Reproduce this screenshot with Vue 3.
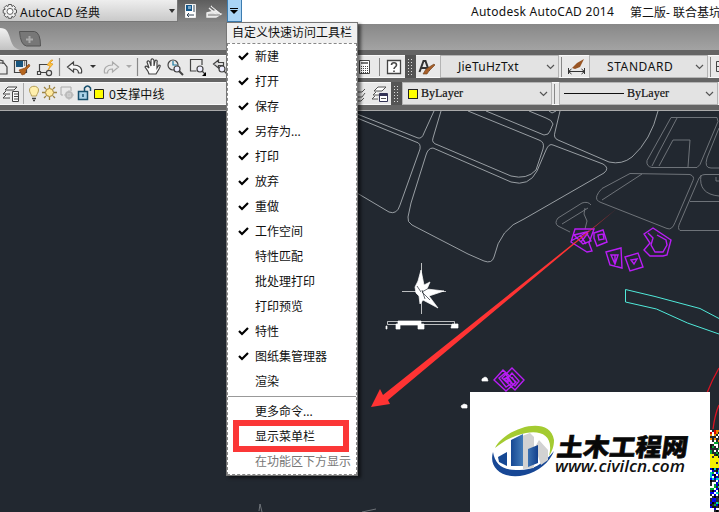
<script setup>
const menu = [
  ['新建', 1], ['打开', 1], ['保存', 1], ['另存为...', 1], ['打印', 1], ['放弃', 1], ['重做', 1],
  ['工作空间', 1], ['特性匹配', 0], ['批处理打印', 0], ['打印预览', 0], ['特性', 1], ['图纸集管理器', 1], ['渲染', 0],
]
const palette = ['#0000d8', '#fff', '#000', '#0a3', '#111', '#00f', '#222830', '#0cc', '#222830', '#fff']
const specks = []
let seed = 7
for (let y = 430; y < 512; y += 2) {
  for (let x = 710; x < 719; x += 2) {
    seed = (seed * 73 + 41) % 1009
    let c = palette[seed % palette.length]
    if (y < 442) c = ['#d00', '#222830', '#fff', '#e80', '#222830'][seed % 5]
    else if (y < 454) c = ['#222830', '#111', '#0a3', '#222830', '#fff'][seed % 5]
    else if (y < 468 && y > 452 + (x - 710) / 2) c = seed % 9 ? '#f5f000' : '#333'
    specks.push({ x, y, c })
  }
}
</script>

<template>
  <div class="app">
    <header class="titlebar">
      <div class="workspace">
        <svg class="gear" width="18" height="22" viewBox="1 0 18 22">
          <path d="M8.500 4.500h3l.5 2 1.500-1 2 2-1 1.800 2 .6v3l-2 .6 1 1.800-2 2-1.600-1-.5 2h-3l-.6-2-1.600 1-2-2 1-1.800-2-.6v-3l2-.6-1-1.800 2-2 1.700 1z" fill="#eee" stroke="#555" />
          <circle cx="10" cy="11.400" r="3" fill="#fff" stroke="#666" />
        </svg>
        <span class="wsname">AutoCAD 经典</span>
        <i class="tri"></i>
      </div>
      <div class="quick">
        <svg width="49" height="22" viewBox="177 0 49 22">
          <path d="M184.500 4.500h10v13h-10z" fill="#fff" stroke="#eee" />
          <path d="M185 5h6v6h-6z" fill="#15588b" /><path d="M187 6h3v3h-3z" fill="#7ca6c5" />
          <path d="M193 5v7M186 15h7M188 13l-2 2 2 2" stroke="#345" fill="none" />
          <path d="M206 13l8-2 6 3-5 3h-9zM210 6l10 8M208 8l8 7" fill="#ddd" stroke="#eee" stroke-width="1.400" />
          <path d="M211 6l9 7M207 15h12" stroke="#555" stroke-width=".7" />
        </svg>
      </div>
      <div class="customize"><svg width="13" height="22" viewBox="0 0 13 22"><path d="M2 8.500h8" stroke="#000" /><path d="M2 10h8l-4 4z" /></svg></div>
      <div class="doctitle"><span class="product">Autodesk AutoCAD 2014</span><span class="docname">第二版- 联合基坑</span></div>
    </header>

    <div class="tabs">
      <svg width="50" height="28" viewBox="0 22 50 28">
        <defs><linearGradient id="tabg" x2="0" y2="1"><stop stop-color="#f2f2f2" /><stop offset="1" stop-color="#c2c2c2" /></linearGradient></defs>
        <path d="M0 28c7 0 8 4 10 10 2 7 4 10 10 12H0z" fill="url(#tabg)" />
        <path d="M19.500 31.500h15q6 1 6 14.500h-14q-6-1-7-14.500z" fill="#777" stroke="#555" />
        <path d="M29.500 36v7M26 39.500h7" stroke="#aaa" stroke-width="2" />
      </svg>
    </div>

    <div class="bar first">
      <div class="panel standard">
        <svg width="228" height="23" viewBox="0 55 228 23" fill="none" stroke="#444" stroke-width="1.200">
          <path d="M0 63h4l3 4v7H0M0 60l3 1v3" />
          <path d="M14.500 60.500h12v12h-12z" fill="#eee" /><path d="M16 61h7v6h-7z" fill="#18557e" stroke="none" /><path d="M24.500 61v5" stroke="#888" />
          <path d="M19 70l6-2 4-4 1 2-4 4-1 4-3 1z" fill="#b5651d" stroke="#843f10" stroke-width=".6" />
          <path d="M39 64.500h9M39.500 64v8M39 72.500h7" /><path d="M37.500 71.500h3v3h-3z" fill="#eee" /><circle cx="49" cy="73" r="2.600" />
          <path d="M51 60l-4 5 3 1-2 4 5-6-3-1 3-3z" fill="#ffc23e" stroke="#d58b0a" stroke-width=".6" />
          <path d="M59.500 58v18M137.500 58v18" stroke="#888" />
          <path d="M67.500 67l6-5v3c6 0 9 3 8 8h-3c0-3-2-4-5-4v3z" fill="#f8f8f8" />
          <path d="M90 65h6l-3 3z" fill="#333" stroke="none" />
          <path d="M118.500 67l-6-5v3c-6 0-9 3-8 8h3c0-3 2-4 5-4v3z" stroke="#aaa" /><path d="M126 65h6l-3 3z" fill="#aaa" stroke="none" />
          <path d="M149 74c-1-4-3-5-4-7 1-2 3 0 4 1l-2-6c1-2 3-1 3 1l1 3v-6c1-2 3-1 3 1v5l1-5c1-2 3 0 2 1v6l2-3c2 0 1 2 0 4l-3 5z" fill="#fafafa" />
          <circle cx="173" cy="65" r="5" /><path d="M173 61v4h4" stroke="#197ba3" /><circle cx="177" cy="69" r="3" fill="#eef" /><path d="M179 71l4 4" stroke-width="2" />
          <path d="M202 65v-5.500h-11.500v11.500h6" /><circle cx="200" cy="69" r="3" fill="#eef" /><path d="M202 71l3 3" /><path d="M206 72v4h-4z" fill="#000" stroke="none" />
          <path d="M213.500 64l5-4v2.500h5v3h-5v2.500z" fill="#ddd" /><circle cx="222" cy="69" r="3" fill="#eef" /><path d="M224 71l3 3" />
        </svg>
        <svg class="right" width="48" height="23" viewBox="357 55 48 23" fill="none" stroke="#444">
          <path d="M359.500 60.500h10v13h-10z" fill="#fff" /><path d="M361 62h7v2h-7z" fill="#777" stroke="none" /><path d="M361 66.500h7M361 68.500h7M361 70.500h7M361 72.500h7" stroke-dasharray="1 1" /><path d="M379.500 58v18" stroke="#888" />
          <path d="M387.500 60.500h13v13h-13z" fill="#fff" stroke-width="1.300" /><path d="M391.500 65c0-3 5-3 5 0 0 2-2.500 2-2.500 4M394 70.500v1.500" stroke-width="1.600" />
        </svg>
      </div>
      <i class="grip"></i>
      <div class="panel styles">
        <svg width="24" height="23" viewBox="416 55 24 23"><path d="M419.500 72l4-11h2l3.500 10M421 68h7" fill="none" stroke="#333" stroke-width="2" /><path d="M423 74l3-5 8-5 1 1-6 6-2 3z" fill="#a85f29" stroke="#69401c" stroke-width=".6" /></svg>
        <div class="combo textstyle"><span>JieTuHzTxt</span><svg width="9" height="6" viewBox="0 0 9 6"><path class="chev" d="M1 1l3.500 3.500L8 1" /></svg></div>
        <i class="sep"></i>
        <svg width="25" height="23" viewBox="564 55 25 23"><path d="M568.500 68v6M584.500 68v6M569 71.500h15M571.500 69l-3 2.500 3 2.500M581.500 69l3 2.500-3 2.500" fill="none" stroke="#333" /><path d="M572 68l5-5 7-4-4 8-5 2z" fill="#985524" /></svg>
        <div class="combo dimstyle"><span>STANDARD</span><svg width="9" height="6" viewBox="0 0 9 6"><path class="chev" d="M1 1l3.500 3.500L8 1" /></svg></div>
        <i class="sep"></i>
        <svg width="6" height="23" viewBox="713 55 6 23"><path d="M719 61.500h-2.500v10h2.500M717 66.500h2" fill="none" stroke="#444" /></svg>
      </div>
    </div>

    <div class="bar second">
      <div class="panel layers">
        <svg width="108" height="23" viewBox="0 82 108 23" fill="none" stroke="#444">
          <path d="M5 90l3-3h9l-3 3zM10 94H3l3-3M10 98H3l3-3M12.500 91.500h6v10h-6z" fill="#fafafa" /><path d="M14 94h4M14 96.500h4M14 99h4" /><path d="M23.500 83v21" stroke="#aaa" />
          <path d="M31.500 96c0-2-2-3-2-6 0-5 9-5 9 0 0 3-2 4-2 6z" fill="#ffefad" stroke="#b6a05b" /><path d="M32 98.500h4M33 100.500h2" stroke-width="1.500" />
          <path d="M49.500 85v3M49.500 97v3M42 92.500h3M54 92.500h3M44 87l2 2M53 96l2 2M55 87l-2 2M46 96l-2 2" stroke="#9c8443" stroke-width="1.300" /><circle cx="49.500" cy="92.500" r="4" fill="#ffeaa0" stroke="#a18134" />
          <path d="M63 95h-2v-8h10v4" stroke="#aaa" /><circle cx="69" cy="95" r="3" stroke="#bbb" stroke-width="2" /><path d="M69 90v10M64 95h10" stroke="#bbb" />
          <path d="M78.500 91.500h9v8h-9z" fill="#abd2e8" stroke="#18506e" stroke-width="1.500" /><path d="M84.500 91v-3q3-4 6 0v3M83 94v3" stroke="#18506e" stroke-width="1.500" />
          <path d="M94.500 89.500h9v9h-9z" fill="#ff0" stroke="#222" />
        </svg>
        <span class="layername">0支撑中线</span>
        <svg class="right" width="34" height="23" viewBox="357 82 34 23" fill="none" stroke="#555">
          <path d="M357 92h5l3-3M357 97h5l3-4M357 101h4l3-3" /><path d="M374 91l4-4h8l-4 4zM379 95h-6l3-3M378 99h-6l3-3" fill="#fff" /><path d="M379.500 93.500h8v8h-8z" fill="#fff" stroke="#335" /><path d="M380 95h7" stroke="#335" stroke-width="2" /><path d="M381 98.500h5" />
        </svg>
      </div>
      <i class="grip"></i>
      <div class="panel props">
        <div class="combo color"><i class="swatch"></i><span>ByLayer</span><svg width="9" height="6" viewBox="0 0 9 6"><path class="chev" d="M1 1l3.500 3.500L8 1" /></svg></div>
        <i class="sep"></i>
        <div class="combo ltype"><i class="line"></i><span>ByLayer</span><svg width="9" height="6" viewBox="0 0 9 6"><path class="chev" d="M1 1l3.500 3.500L8 1" /></svg></div>
      </div>
    </div>

    <main class="canvas">
      <svg width="719" height="401" viewBox="0 111 719 401" fill="none">
        <defs><linearGradient id="fade" gradientUnits="userSpaceOnUse" x1="617" y1="209" x2="570" y2="246"><stop stop-color="#f33" stop-opacity=".45" /><stop offset="1" stop-color="#f33" /></linearGradient></defs>
        <g class="roads">
          <path d="M357 114l61 24q4 1 6-5l10-22M357 118l59 24q5 1 4 7l-20 56q-3 10-11 7l-32-19" />
          <path d="M441 111l-8 27q-2 5 5 7l73 31q16 4 25-6l7-21q2-7-4-9l-71-29" />
          <path d="M486 111l58 24q5 0 6-4l3-7q-1-4-7-6l-17-7M549 111l3 2 4-2" />
          <path d="M433 148q-5 0-7 7l-15 48-3 14q-1 5 4 8l56 29 16 7q8 3 10-4 6-29 30-38l80-46q6-5-1-9l-50-19q-4-2-7 5l-9 21q-8 16-26 11z" />
          <path d="M560 111l-5 21q-2 6 3 8l51 22q13 3 23-5 19-17 26-46" />
        </g>
        <g class="faint">
          <path d="M671 117.500h46l1 4-18 43-3 3h-45q-6-1-5-7zM677 118l-18 34-7 14M659 166l14-26h17l-2 27M719 128l-12 30q-3 10 4 10h8" />
          <path d="M630 173.500l60 1q5 2 3 6l-18 42q-3 8-8 6l-66-26q-6-2-4-7 1-3 5-7zM642 174l-40 26M719 174.500h-14q-5 0-7 6l-18 42q-3 6 0 8h39M690 201.500h29M701 175q-3 19 18 21M716 177v4h3" />
          <path d="M591 205q-3-4-9-2l-24 15q-4 5 0 8l12 6M588 208l-26 16M585 208l-1 6 3 7-2 8M262 512l-2-8-1 7M362 512l14-3" />
        </g>
        <g class="buildings">
          <path d="M575 229h19l-5 14 3 8-5 1-16-10zM574 235l9 9 8-3-5-9zM580 235l6 9M588 233l-7 9M594 233l9-3 4 12-10 4-3-8zM598 235l5-1 1 5-5 1zM571 241l18-10" />
          <path d="M606 252l15-4 1 20-12-3zM611 255h7l-3 9zM615 255v9M625 257l13-4 5 14-13 4zM631 260l6-1-3 5z" />
          <path d="M644 234l9-6 18 12-4 15-4 1h-13l-6-6 6-7zM648 233l5 5-2 7 4 7h8l4-7-1-5-9-5" />
          <path d="M494 380l9-10 13 12-10 9zM502 378l10-10 12 12-9 10zM499 378l6-5 7 10-6 4zM507 379l5-6 7 8-4 5zM504 379l4-2v5zM512 377l3 5" />
        </g>
        <path d="M719 318.500l-19-10-45-12-29.500-7V302l31 7 31 14 31.500 11" stroke="#50eada" />
        <path d="M719 368q-7 12-12 25M719 405q-4 9-6 24" stroke="#dc1323" stroke-width="1.300" />
        <g fill="#fff" stroke="#fff" stroke-width=".7">
          <path d="M421.500 263v51M402 291.500h44" /><path d="M421 270l3 15 6-3-3 7 17 2-15 5 9 12-15-8-3 4-1-8-3-3-1-6 3-6z" />
          <path d="M422 292l7-4M422 290l3 9M421 292l-4-6M422 292l8 8" stroke="#222830" />
          <path d="M387.500 321.500h67v3h-67z" fill="none" /><path d="M398 321h23v4h-23zM396 324h4v5h-4zM418 324h6v5h-6zM452 324h6v4h-7zM386 326h1v3h-1zM482 379l3-2 2 1 1 3h-6zM461 406l3-2 3 1v3h-5z" />
        </g>
        <path d="M371 407l9-18 3 6L617 208.500 388 400l2 4z" fill="url(#fade)" />
        <rect v-for="s in specks" :key="s.x + '-' + s.y" :x="s.x" :y="s.y" width="2" height="2" :fill="s.c" />
      </svg>
    </main>

    <aside class="brand">
      <svg width="240" height="120" viewBox="470 392 240 120">
        <defs><linearGradient id="blue" x2="1"><stop stop-color="#164894" /><stop offset=".5" stop-color="#4a83be" /><stop offset="1" stop-color="#123f8c" /></linearGradient></defs>
        <path d="M495 448c10-20 55-34 59-8 0 7-2 11-5 16 5-20-7-26-23-23-14 3-22 8-31 15z" fill="#a4cb31" />
        <path d="M493 452c-5 17 11 28 32 23 13-3 25-13 29-24-12 15-24 20-38 19-14 0-21-6-23-18z" fill="#174795" />
        <path d="M522 436l8-3 4 4v31l-11 1zM535 447l4-7 9 10v10l-7 5z" fill="#d2d2d2" />
        <path d="M511 440l12-6v32h-12zM528 449l10-4v18l-10 4z" fill="url(#blue)" /><path d="M498 457l9-5v14l-8-4z" fill="#164894" />
        <text class="brandname" transform="translate(556 455.500) skewX(-8)" textLength="131" lengthAdjust="spacingAndGlyphs">土木工程网</text>
        <text class="brandurl" x="555" y="472" textLength="130" lengthAdjust="spacingAndGlyphs">www.civilcn.com</text>
      </svg>
    </aside>

    <nav class="menu">
      <div class="menuhead">自定义快速访问工具栏</div>
      <div class="menubody">
        <div v-for="m in menu" :key="m[0]" class="item">
          <svg v-if="m[1]" width="11" height="10" viewBox="0 0 11 10"><path d="M1 5l3 3 6-6" fill="none" stroke="#000" stroke-width="2.200" /></svg>
          <span>{{ m[0] }}</span>
        </div>
        <i class="rule"></i>
        <div class="item"><span>更多命令...</span></div>
        <div class="item chosen"><span>显示菜单栏</span></div>
        <div class="item muted"><span>在功能区下方显示</span></div>
      </div>
    </nav>
  </div>
</template>

<style>
body { overflow: hidden; }
</style>
<style scoped>
* { box-sizing: border-box; }
.app { position: relative; width: 719px; height: 512px; overflow: hidden; display: flex; flex-direction: column; background: #222830; font: 12px "Noto Sans", "Noto Sans CJK SC", sans-serif; color: #111; white-space: nowrap; }
svg { display: block; flex: none; }
.titlebar { display: flex; align-items: flex-start; height: 24px; flex: none; background: #888; }
.workspace { width: 178px; height: 22px; display: flex; align-items: center; padding-left: 1px; background: linear-gradient(#eee, #c9c9c9); border: 0 solid #777; border-width: 0 1px 1px 0; }
.wsname { flex: 1; margin-left: 1px; padding-top: 2px; letter-spacing: .25px; }
.tri { border: 3.500px solid transparent; border-top: 4px solid #333; border-bottom: 0; margin-right: 2px; }
.quick { width: 49px; height: 22px; background: linear-gradient(#5d5d5d, #858585); }
.customize { width: 15px; height: 22px; background: #a9d4f5; border: 1px solid #3c7cb0; border-top: 0; display: flex; }
.doctitle { flex: 1; height: 24px; background: #fff; display: flex; align-items: center; padding: 0 0 1px 229px; overflow: hidden; }
.product { width: 159px; flex: none; letter-spacing: .27px; }
.docname { flex: none; }
.tabs { height: 26px; flex: none; background: linear-gradient(#888, #a3a3a3); }
.tabs svg { margin-top: -2px; }
.bar { display: flex; flex: none; background: #656565; }
.first { height: 32px; padding: 5px 0 4px; }
.second { height: 29px; padding: 0 0 5px; border-bottom: 1px solid #aaa; }
.panel { display: flex; height: 23px; background: #e9e9e9; border: 0 solid #f8f8f8; border-width: 1px 0; align-items: center; }
.standard { width: 405px; flex: none; }
.layers { width: 391px; flex: none; }
.right { margin-left: auto; }
.grip { width: 11px; flex: none; background: radial-gradient(circle, #ddd 0 .6px, #555 1px) 3px 3px / 3px 3px; border: 3px solid #555; border-width: 3px 2px; }
.styles, .props { flex: 1; min-width: 0; }
.combo { display: flex; align-items: center; height: 23px; background: #e3e3e3; border: 1px solid #b4b4b4; flex: none; }
.combo > svg { margin: 0 3px 0 auto; }
.chev { fill: none; stroke: #555; stroke-width: 1.200; }
.sep { width: 2px; height: 20px; margin: 0 1px 0 2px; border-left: 1px solid #888; flex: none; }
.textstyle { width: 119px; padding-left: 17px; letter-spacing: .25px; }
.dimstyle { width: 119px; padding-left: 17px; letter-spacing: .6px; }
.color, .ltype { font-family: "Liberation Serif", serif; font-size: 12px; letter-spacing: 0; -webkit-text-stroke: .2px #111; }
.color { width: 150px; padding-left: 5px; }
.ltype { width: 159px; margin-left: 2px; padding-left: 4px; }
.swatch { width: 10px; height: 10px; background: #ff0; border: 1px solid #222; margin-right: 3px; }
.line { width: 60px; height: 1px; background: #111; margin-right: 3px; }
.layername { margin-left: 1px; padding-top: 1px; letter-spacing: .15px; }
.canvas { height: 401px; flex: none; }
.roads { stroke: #a6abb0; stroke-width: .9; }
.faint { stroke: #777c81; stroke-width: .9; }
.buildings { stroke: #b91df5; stroke-width: 1.400; }
.brand { position: absolute; left: 470px; top: 392px; width: 240px; height: 120px; background: #fff; }
.brandname { font: 900 24.500px "Noto Sans CJK SC", sans-serif; fill: #080808; stroke: #080808; stroke-width: .6; }
.brandurl { font: italic 600 15.500px "Open Sans", sans-serif; fill: #111; }
.menu { position: absolute; left: 226px; top: 22px; width: 132px; height: 454px; background: #fff; border: 1px solid #777; box-shadow: 3px 2px 3px #0008; }
.menuhead { height: 20px; background: #f0f0f0; padding-left: 5px; line-height: 20px; }
.menubody { height: 432px; border: 1px dashed #888; }
.item { height: 25px; display: flex; align-items: center; position: relative; padding: 0 0 2px 27px; }
.item svg { position: absolute; left: 10px; top: 7px; }
.rule { display: block; height: 1px; background: #999; margin: 2px 0; }
.muted { color: #777; }
.chosen::after { content: ""; box-sizing: border-box; position: absolute; left: 5px; top: -4px; width: 116px; height: 32px; border: 6px solid #fb3737; z-index: 1; }
</style>
